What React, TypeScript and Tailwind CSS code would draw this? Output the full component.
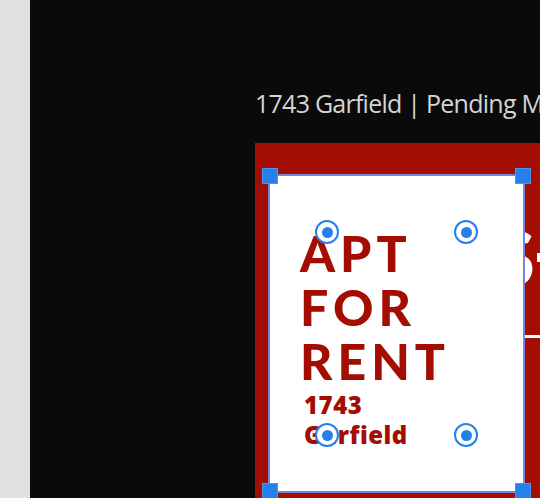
import React from "react";

const Handle = ({ className }: { className: string }) => (
  <div
    className={`absolute w-[16px] h-[16px] bg-[#2680eb] border border-[#4a95f0] ${className}`}
  />
);

const Pin = ({ className }: { className: string }) => (
  <div
    className={`absolute w-[24px] h-[24px] rounded-full bg-white border-2 border-[#2680eb] flex items-center justify-center ${className}`}
  >
    <div className="w-[11px] h-[11px] rounded-full bg-[#2680eb]" />
  </div>
);

export default function App() {
  return (
    <div className="flex w-[540px] h-[498px] overflow-hidden">
      <div className="w-[30px] shrink-0 bg-[#e1e1e1]" />
      <div className="flex-1 bg-[#0a0a0a] pl-[225px] pt-[83px] overflow-hidden">
        <div
          className="h-[40px] text-[25px] leading-[40px] text-[#d4d4d4] whitespace-nowrap tracking-[-0.75px]"
          style={{ fontFamily: '"Open Sans", sans-serif' }}
        >
          1743 Garfield | Pending Moves
        </div>
        <div className="relative mt-[20px] w-[400px] h-[400px] bg-[#a30d02] pt-[31px] pl-[13px]">
          {/* design content behind the selected frame */}
          <div
            className="absolute left-[238px] top-[76px] text-[76px] leading-none font-black text-white"
            style={{ fontFamily: "Lato, sans-serif" }}
          >
            S
          </div>
          <div className="absolute left-[282px] top-[110px] w-[6px] h-[9px] bg-white" />
          <div className="absolute left-[270px] top-[192px] w-[40px] h-[3px] bg-white" />

          <div className="relative w-[257px] h-[319px] bg-white border-2 border-[#7a84d6] pt-[50px] pl-[30px] text-[#a30d02]">
            <div
              className="text-[50px] leading-[54px] font-black tracking-[5px]"
              style={{ fontFamily: "Lato, sans-serif" }}
            >
              <div>APT</div>
              <div>FOR</div>
              <div>RENT</div>
            </div>
            <div
              className="mt-[2px] pl-[4px] text-[24px] leading-[30px] font-extrabold tracking-[0.5px]"
              style={{ fontFamily: '"Open Sans", sans-serif' }}
            >
              <div>1743</div>
              <div>Garfield</div>
            </div>

            <Pin className="left-[45px] top-[44px]" />
            <Pin className="left-[184px] top-[44px]" />
            <Pin className="left-[45px] top-[247px]" />
            <Pin className="left-[184px] top-[247px]" />

            <Handle className="-left-[8px] -top-[8px]" />
            <Handle className="-right-[8px] -top-[8px]" />
            <Handle className="-left-[8px] -bottom-[8px]" />
            <Handle className="-right-[8px] -bottom-[8px]" />
          </div>
        </div>
      </div>
    </div>
  );
}
